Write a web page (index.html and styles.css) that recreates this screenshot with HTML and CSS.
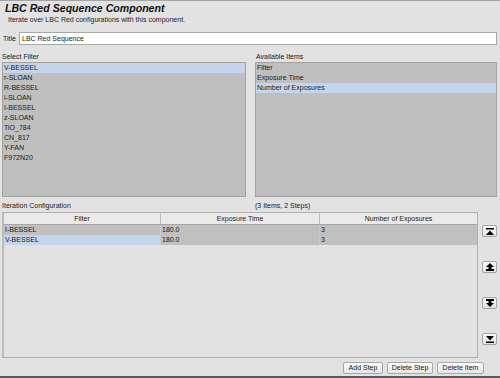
FILE: index.html
```html
<!DOCTYPE html>
<html>
<head>
<meta charset="utf-8">
<link rel="stylesheet" href="styles.css">
</head>
<body>
<div class="page">
  <div class="header">
    <div class="title">LBC Red Sequence Component</div>
    <div class="subtitle">Iterate over LBC Red configurations with this component.</div>
  </div>
  <div class="title-row">
    <span class="lbl">Title</span>
    <div class="input">LBC Red Sequence</div>
  </div>
  <div class="lists">
    <div class="col">
      <div class="cap">Select Filter</div>
      <div class="list">
        <div class="item sel">V-BESSEL</div>
        <div class="item">r-SLOAN</div>
        <div class="item">R-BESSEL</div>
        <div class="item">i-SLOAN</div>
        <div class="item">I-BESSEL</div>
        <div class="item">z-SLOAN</div>
        <div class="item">TiO_784</div>
        <div class="item">CN_817</div>
        <div class="item">Y-FAN</div>
        <div class="item">F972N20</div>
      </div>
    </div>
    <div class="col">
      <div class="cap">Available Items</div>
      <div class="list">
        <div class="item">Filter</div>
        <div class="item">Exposure Time</div>
        <div class="item sel">Number of Exposures</div>
      </div>
    </div>
  </div>
  <div class="iter-caps">
    <div class="cap">Iteration Configuration</div>
    <div class="cap">(3 Items, 2 Steps)</div>
  </div>
  <div class="table-area">
    <div class="table">
      <div class="trow head">
        <div class="th">Filter</div>
        <div class="th">Exposure Time</div>
        <div class="th">Number of Exposures</div>
      </div>
      <div class="trow">
        <div class="td">I-BESSEL</div>
        <div class="td">180.0</div>
        <div class="td">3</div>
      </div>
      <div class="trow">
        <div class="td sel">V-BESSEL</div>
        <div class="td">180.0</div>
        <div class="td">3</div>
      </div>
    </div>
    <div class="side">
      <div class="sbtn"><svg width="8" height="7" viewBox="0 0 8 7"><rect x="0" y="0" width="8" height="1.5" fill="#000"/><polygon points="4,2.5 8,7 0,7" fill="#000"/></svg></div>
      <div class="sbtn"><svg width="8" height="8" viewBox="0 0 8 8"><polygon points="4,0 8,4 0,4" fill="#000"/><rect x="2.5" y="4" width="3" height="2" fill="#000"/><rect x="0" y="6" width="8" height="2" fill="#000"/></svg></div>
      <div class="sbtn"><svg width="8" height="8" viewBox="0 0 8 8"><rect x="0" y="0" width="8" height="2" fill="#000"/><rect x="2.5" y="2" width="3" height="2" fill="#000"/><polygon points="0,4 8,4 4,8" fill="#000"/></svg></div>
      <div class="sbtn"><svg width="8" height="7" viewBox="0 0 8 7"><polygon points="0,0 8,0 4,4.5" fill="#000"/><rect x="0" y="5.5" width="8" height="1.5" fill="#000"/></svg></div>
    </div>
  </div>
  <div class="buttons">
    <div class="btn w40">Add Step</div>
    <div class="btn w46">Delete Step</div>
    <div class="btn w47">Delete Item</div>
  </div>
  <div class="bottom-bar"></div>
</div>
</body>
</html>
```
FILE: styles.css
```css
* { box-sizing: border-box; }
html, body { margin: 0; padding: 0; }
body {
  width: 500px;
  height: 378px;
  overflow: hidden;
  background: #e2e2e2;
  font-family: "Liberation Sans", Arial, sans-serif;
  font-size: 7px;
  color: #1a1a1a;
}
.page {
  display: flex;
  flex-direction: column;
  height: 378px;
}
.header {
  height: 32px;
  border-top: 1px solid #a4a4a4;
  padding-left: 5px;
}
.title {
  font-size: 10.6px;
  font-weight: bold;
  font-style: italic;
  line-height: 13px;
  margin-top: 1px;
  color: #111;
}
.subtitle {
  padding-left: 3px;
  line-height: 9px;
  color: #222;
}
.title-row {
  display: flex;
  align-items: center;
  padding: 0 3px 0 3px;
  height: 13px;
}
.lbl { width: 16px; }
.input {
  flex: 1;
  height: 13px;
  background: #fff;
  border: 1px solid #a8a8a8;
  line-height: 11px;
  padding-left: 2px;
}
.lists {
  display: grid;
  grid-template-columns: 244px 242px;
  column-gap: 9px;
  padding: 0 3px 0 2px;
  margin-top: 6px;
}
.cap { line-height: 11px; }
.col .cap { height: 11px; }
.col:nth-child(2) .cap { padding-left: 1px; }
.list {
  height: 135px;
  background: #bfbfbf;
  border: 1px solid #a2a2a2;
  padding-top: 0;
}
.item {
  height: 10px;
  line-height: 10px;
  padding-left: 1px;
}
.item.sel { background: #c5d5eb; }
.iter-caps {
  display: grid;
  grid-template-columns: 253px 1fr;
  padding-left: 2px;
  margin-top: 2px;
  height: 13px;
}
.iter-caps .cap { line-height: 13px; }
.table-area {
  display: flex;
  padding-left: 2px;
  gap: 4px;
  height: 146px;
}
.table {
  width: 476px;
  height: 146px;
  border: 1px solid #b2b2b2;
  border-left: 2px solid #bcbcbc;
  background: #e2e2e2;
}
.trow {
  display: grid;
  grid-template-columns: 157px 159px 1fr;
  height: 10px;
  background: #c0c0c0;
}
.trow.head {
  height: 12px;
  background: #eaeaea;
  border-bottom: 1px solid #a6a6a6;
}
.th {
  text-align: center;
  line-height: 11px;
  border-right: 1px solid #bdbdbd;
}
.td {
  line-height: 10px;
  padding-left: 1px;
  border-right: 1px solid #cacaca;
}
.th:last-child, .td:last-child { border-right: none; }
.td.sel { background: #c5d5eb; }
.side {
  display: flex;
  flex-direction: column;
  gap: 24px;
  padding-top: 13px;
}
.sbtn {
  width: 15px;
  height: 12px;
  background: linear-gradient(#f8f8f8, #e4e4e4);
  border: 1px solid #a4a4a4;
  border-radius: 2px;
  display: flex;
  align-items: center;
  justify-content: center;
}
.buttons {
  display: flex;
  justify-content: flex-end;
  gap: 4px;
  padding-right: 16px;
  margin-top: 4px;
}
.btn {
  height: 12px;
  line-height: 10px;
  text-align: center;
  background: linear-gradient(#fbfbfb, #e6e6e6);
  border: 1px solid #a8a8a8;
  border-radius: 2px;
  color: #222;
}
.w40 { width: 40px; }
.w46 { width: 46px; }
.w47 { width: 47px; }
.bottom-bar {
  margin-top: auto;
  height: 2px;
  background: #5a5a5a;
}
```
